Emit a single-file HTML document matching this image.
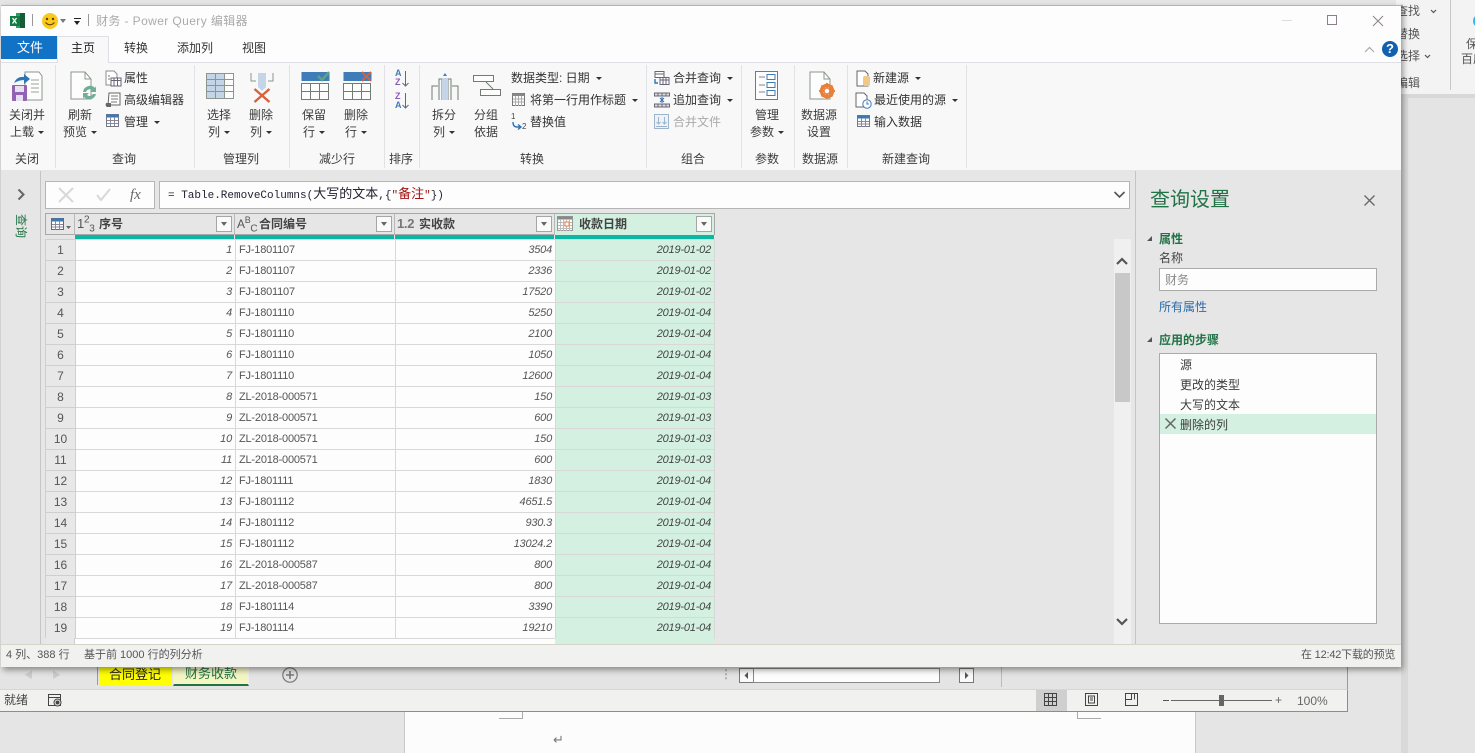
<!DOCTYPE html>
<html lang="zh"><head><meta charset="utf-8"><title>财务 - Power Query 编辑器</title>
<style>
*{box-sizing:border-box}
html,body{margin:0;padding:0;width:1475px;height:753px;overflow:hidden;background:#e5e5e5;font-family:"Liberation Sans","Noto Sans CJK SC",sans-serif;font-size:12px;color:#444}
.a{position:absolute}
.t{position:absolute;white-space:nowrap;line-height:16px;font-size:12px;color:#3c3c3c}
.c{text-align:center;transform:translateX(-50%)}
.gl{position:absolute;top:65px;height:103px;width:1px;background:#e2e2e6}
.ar{display:inline-block;width:0;height:0;border-left:3px solid transparent;border-right:3px solid transparent;border-top:3px solid #333;vertical-align:2px;margin-left:4px}
svg{position:absolute;overflow:visible}
table{position:absolute;left:45px;top:239px;border-collapse:collapse;table-layout:fixed;width:669px;background:#fdfdfd}
td{height:21px;padding:0 3px;font-size:11px;line-height:20px;border:1px solid #d8d8d8;border-left-style:dashed;color:#555;white-space:nowrap;overflow:hidden;letter-spacing:-.2px}
td:first-child{background:#e8e8e8;text-align:center;font-size:12px;color:#555;border:1px solid #cfcfcf;letter-spacing:0}
td:nth-child(2),td:nth-child(4),td:nth-child(5){text-align:right;font-style:italic}
td:nth-child(5){background:#d4f0e1;color:#444}
.ha{position:absolute;top:214px;height:21px;line-height:20px;font-weight:bold;font-size:12px;color:#444;white-space:nowrap}
.fb{position:absolute;top:216px;width:16px;height:16px;background:#fafafa;border:1px solid #a5a5a5}
.fb:after{content:"";position:absolute;left:4px;top:5px;border-left:3px solid transparent;border-right:3px solid transparent;border-top:4px solid #666}
</style></head><body>

<!-- Excel behind (top right) -->
<div class="a" style="left:1396px;top:0;width:79px;height:94px;background:#f3f3f3"></div>
<div class="a" style="left:1450px;top:0;width:1px;height:90px;background:#c8c8c8"></div>
<div class="a" style="left:1401px;top:94px;width:74px;height:4px;background:#d8d8d8"></div>
<div class="a" style="left:1401px;top:98px;width:7px;height:655px;background:#d9d9d9"></div>
<div class="a" style="left:1408px;top:98px;width:67px;height:655px;background:#e4e4e4"></div>
<div class="t" style="left:1396px;top:3px;color:#555">查找</div>
<div class="t" style="left:1396px;top:26px;color:#555">替换</div>
<div class="t" style="left:1396px;top:48px;color:#555">选择</div>
<div class="t" style="left:1396px;top:75px;color:#555">编辑</div>
<svg style="left:1430px;top:9px" width="7" height="5"><path d="M1 1l2.500 2.500L6 1" fill="none" stroke="#555" stroke-width="1.200"/></svg>
<svg style="left:1424px;top:54px" width="7" height="5"><path d="M1 1l2.500 2.500L6 1" fill="none" stroke="#555" stroke-width="1.200"/></svg>
<div class="t" style="left:1466px;top:36px;color:#555">保</div>
<div class="t" style="left:1461px;top:51px;color:#555">百度</div>
<div class="a" style="left:1473px;top:16px;width:6px;height:10px;border-radius:50%;background:#35b5e8"></div>

<!-- Excel lower part -->
<div class="a" style="left:0;top:667px;width:1348px;height:22px;background:#e4e4e4"></div>
<div class="a" style="left:0;top:689px;width:1348px;height:23px;background:#f1f1f0;border-top:1px solid #d6d6d6;border-bottom:1px solid #8a8f8a;border-right:1px solid #8a8f8a"></div>
<div class="a" style="left:1347px;top:667px;width:1px;height:22px;background:#9a9a9a"></div>
<div class="a" style="left:404px;top:712px;width:792px;height:41px;background:#fcfcfc;border-left:1px solid #c8c8c8;border-right:1px solid #c8c8c8"></div>
<div class="a" style="left:499px;top:712px;width:24px;height:7px;border-bottom:1px solid #aaa;border-right:1px solid #aaa"></div>
<div class="a" style="left:1077px;top:712px;width:24px;height:7px;border-bottom:1px solid #aaa;border-left:1px solid #aaa"></div>
<div class="t" style="left:553px;top:732px;font-size:13px;color:#777">↵</div>
<div class="a" style="left:97px;top:667px;width:1px;height:18px;background:#9a9a9a"></div>
<div class="a" style="left:100px;top:667px;width:71px;height:19px;background:#ffff00"></div>
<div class="t" style="left:109px;top:666px;font-size:13px;line-height:18px;color:#222">合同登记</div>
<div class="a" style="left:173px;top:667px;width:76px;height:19px;background:#f3f5c2;border-bottom:2px solid #217346;border-left:1px solid #eee;border-right:1px solid #eee"></div>
<div class="t" style="left:185px;top:665px;font-size:13px;line-height:18px;color:#217346">财务收款</div>
<svg style="left:282px;top:667px" width="16" height="16"><circle cx="8" cy="8" r="7.2" fill="none" stroke="#777" stroke-width="1.2"/><path d="M4 8h8M8 4v8" stroke="#777" stroke-width="1.6"/></svg>
<div class="t" style="left:24px;top:667px;color:#ccc;font-size:9px">◀</div><div class="t" style="left:52px;top:667px;color:#ccc;font-size:9px">▶</div>
<div class="t" style="left:720px;top:666px;color:#aaa;font-size:12px;font-weight:bold">⋮</div>
<div class="a" style="left:739px;top:668px;width:15px;height:15px;background:#fafafa;border:1px solid #777"></div>
<svg style="left:739px;top:668px" width="15" height="15"><path d="M9 4v7L5.5 7.5z" fill="#555"/></svg>
<div class="a" style="left:753px;top:668px;width:187px;height:15px;background:#fdfdfd;border:1px solid #888"></div>
<div class="a" style="left:959px;top:668px;width:15px;height:15px;background:#fafafa;border:1px solid #777"></div>
<svg style="left:959px;top:668px" width="15" height="15"><path d="M6 4v7l3.5-3.5z" fill="#555"/></svg>
<div class="a" style="left:1001px;top:667px;width:1px;height:20px;background:#bbb"></div>
<div class="t" style="left:4px;top:692px;color:#444">就绪</div>
<svg style="left:47px;top:693px" width="16" height="15" fill="none" stroke="#444"><rect x="1.5" y="1.5" width="12" height="11"/><path d="M1.5 4.5h12"/><circle cx="10.5" cy="9.5" r="3.5" fill="#f1f1f0"/><circle cx="10.5" cy="9.5" r="1.5" fill="#444"/></svg>
<div class="a" style="left:1036px;top:690px;width:31px;height:21px;background:#cfcfcf"></div>
<svg style="left:1044px;top:693px" width="14" height="14" fill="none" stroke="#444"><rect x=".5" y=".5" width="12" height="12"/><path d="M4.500.5v12M8.500.5v12M.5 4.500h12M.5 8.500h12"/></svg>
<svg style="left:1085px;top:693px" width="14" height="14" fill="none" stroke="#444"><rect x=".5" y=".5" width="12" height="12"/><rect x="3.500" y="3" width="6" height="7"/><path d="M5 5h3M5 7h3"/></svg>
<svg style="left:1125px;top:693px" width="14" height="14" fill="none" stroke="#444"><rect x=".5" y=".5" width="12" height="12"/><path d="M6.500.5v6H.5M9.500.5v6"/></svg>
<div class="a" style="left:1163px;top:700px;width:6px;height:1px;background:#555"></div>
<div class="a" style="left:1171px;top:700px;width:101px;height:1px;background:#666"></div>
<div class="a" style="left:1219px;top:695px;width:5px;height:11px;background:#666"></div>
<div class="t" style="left:1275px;top:692px;color:#666">+</div>
<div class="t" style="left:1297px;top:693px;color:#666">100%</div>

<!-- PQ window -->
<div class="a" style="left:1px;top:5px;width:1400px;height:662px;background:#e6e6e6;box-shadow:2px 3px 6px rgba(0,0,0,.4);border-top:1px solid #b5b5a8"></div>
<div class="a" style="left:1px;top:6px;width:1400px;height:57px;background:#fdfdfd"></div>
<div class="a" style="left:1px;top:62px;width:1400px;height:1px;background:#e0dfe6"></div>
<div class="a" style="left:1px;top:63px;width:1400px;height:107px;background:#f8f8f9"></div>

<!-- title bar -->
<svg style="left:9px;top:12px" width="17" height="17"><rect x="7" y="1" width="9" height="15" fill="#21a366"/><rect x="11" y="1" width="5" height="15" fill="#185c37"/><rect x="1" y="4" width="10" height="10" fill="#107c41"/><path d="M3.500 6l4 5.500M7.500 6l-4 5.500" stroke="#fff" stroke-width="1.300"/></svg>
<div class="a" style="left:32px;top:14px;width:1px;height:12px;background:#999"></div>
<svg style="left:41px;top:12px" width="18" height="18"><circle cx="9" cy="9" r="8" fill="#fbc81c"/><circle cx="6" cy="7" r="1.200" fill="#5a4000"/><circle cx="12" cy="7" r="1.200" fill="#5a4000"/><path d="M4.500 10.500q4.500 4.500 9 0" fill="none" stroke="#5a4000" stroke-width="1.100"/></svg>
<div class="a" style="left:60px;top:19px;border-left:3px solid transparent;border-right:3px solid transparent;border-top:4px solid #777"></div>
<div class="a" style="left:74px;top:18px;width:7px;height:1px;background:#222"></div>
<div class="a" style="left:74px;top:21px;border-left:3.5px solid transparent;border-right:3.5px solid transparent;border-top:4px solid #222"></div>
<div class="a" style="left:88px;top:14px;width:1px;height:12px;background:#999"></div>
<div class="t" style="left:96px;top:13px;font-size:12px;color:#aaa;letter-spacing:.4px">财务 - Power Query 编辑器</div>
<div class="a" style="left:1282px;top:20px;width:10px;height:1px;background:#ddd"></div>
<div class="a" style="left:1327px;top:15px;width:10px;height:10px;border:1px solid #8a7f8a"></div>
<svg style="left:1372px;top:15px" width="12" height="12"><path d="M1 1l10 10M11 1L1 11" stroke="#8a7f8a" stroke-width="1"/></svg>
<svg style="left:1364px;top:46px" width="11" height="7"><path d="M1 6l4.500-4.500L10 6" fill="none" stroke="#aaa" stroke-width="1.200"/></svg>
<div class="a" style="left:1382px;top:41px;width:16px;height:16px;border-radius:50%;background:#1261ae;color:#fff;text-align:center;font:bold 13px/16px 'Liberation Sans',sans-serif">?</div>

<!-- tabs -->
<div class="a" style="left:1px;top:36px;width:56px;height:23px;background:#1273c6"></div>
<div class="t" style="left:17px;top:40px;color:#fff;font-size:13px">文件</div>
<div class="a" style="left:57px;top:36px;width:52px;height:27px;background:#f8f8f9;border:1px solid #e0dfe6;border-bottom:0"></div>
<div class="t" style="left:71px;top:40px;color:#222">主页</div>
<div class="t" style="left:124px;top:40px;color:#333">转换</div>
<div class="t" style="left:177px;top:40px;color:#333">添加列</div>
<div class="t" style="left:242px;top:40px;color:#333">视图</div>

<!-- ribbon separators -->
<div class="gl" style="left:55px"></div><div class="gl" style="left:194px"></div><div class="gl" style="left:289px"></div><div class="gl" style="left:384px"></div><div class="gl" style="left:419px"></div><div class="gl" style="left:646px"></div><div class="gl" style="left:741px"></div><div class="gl" style="left:794px"></div><div class="gl" style="left:847px"></div><div class="gl" style="left:966px"></div>

<!-- close & load -->
<svg style="left:11px;top:71px" width="32" height="32"><path d="M14 1h14l3 4v24H14z" fill="#fdfdfd" stroke="#8c968c"/><path d="M20 9h8M20 13h8M20 17h8M20 21h8" stroke="#9aa29a"/><rect x="1" y="14" width="15" height="16" rx="1" fill="#9362b5"/><rect x="4" y="15" width="9" height="6" fill="#e8e0f0"/><rect x="5" y="24" width="7" height="6" fill="#e8e0f0"/><path d="M3 12q3-7 10-6V3l6 5-6 5V9q-5 0-10 3z" fill="#2e75b6"/></svg>
<div class="t c" style="left:27px;top:107px">关闭并</div>
<div class="t c" style="left:27px;top:124px">上载<span class="ar"></span></div>
<div class="t c" style="left:27px;top:151px">关闭</div>

<!-- refresh -->
<svg style="left:69px;top:71px" width="30" height="30"><path d="M2 1h14l6 7v20H2z" fill="#fdfdfd" stroke="#8c968c"/><path d="M16 1v7h6" fill="none" stroke="#8c968c"/><path d="M14 21a7 7 0 0 1 12-4l1-2v6h-6l2-2a4 4 0 0 0-6 2zM27 23a7 7 0 0 1-12 3l-1 2v-6h6l-2 2a4 4 0 0 0 6-1z" fill="#72ad98"/></svg>
<div class="t c" style="left:80px;top:107px">刷新</div>
<div class="t c" style="left:80px;top:124px">预览<span class="ar"></span></div>
<svg style="left:105px;top:70px" width="16" height="16"><path d="M1 1h8l3 3v11H1z" fill="#fff" stroke="#8c8c8c"/><rect x="6" y="8" width="10" height="8" fill="#fff" stroke="#667"/><path d="M6 10.500h10M9 8v8M12.500 8v8" stroke="#667"/><path d="M3 6h2M3 9h2" stroke="#777"/></svg>
<div class="t" style="left:124px;top:70px;color:#333">属性</div>
<svg style="left:105px;top:92px" width="16" height="16"><path d="M4 1h11v12H3z" fill="#fff" stroke="#666"/><path d="M6 4h7M6 7h7M6 10h6" stroke="#777"/><path d="M1 11h5v4H2q-2-1-1-4z" fill="#666"/></svg>
<div class="t" style="left:124px;top:92px;color:#333">高级编辑器</div>
<svg style="left:106px;top:114px" width="14" height="14"><rect x=".5" y=".5" width="12" height="12" fill="#fff" stroke="#778"/><rect x=".5" y=".5" width="12" height="3" fill="#3d79b5"/><path d="M4.500 3v9M8.500 3v9M1 6.500h11M1 9.500h11" stroke="#889"/></svg>
<div class="t" style="left:124px;top:114px;color:#333">管理<span class="ar" style="margin-left:6px"></span></div>
<div class="t c" style="left:124px;top:151px">查询</div>

<!-- choose / remove columns -->
<svg style="left:206px;top:73px" width="29" height="27"><rect x=".5" y=".5" width="27" height="25" fill="#c4d5e8" stroke="#8c968c"/><rect x="18.500" y=".5" width="9" height="25" fill="#fdfdfd" stroke="#8c968c"/><path d="M1 6.500h27M1 12.500h27M1 18.500h27M9.500 1v25M18.500 1v25" stroke="#8c968c"/></svg>
<div class="t c" style="left:219px;top:107px">选择</div>
<div class="t c" style="left:219px;top:124px">列<span class="ar"></span></div>
<svg style="left:250px;top:72px" width="24" height="32"><path d="M1 1v8h5M23 1v8h-5" fill="none" stroke="#8c968c"/><path d="M8 1h8v14l-4 4-4-4z" fill="#c4d5e8"/><path d="M3 17l15 13M18 17L3 30" stroke="#d9603b" stroke-width="2.400" transform="translate(1.500 0)"/></svg>
<div class="t c" style="left:261px;top:107px">删除</div>
<div class="t c" style="left:261px;top:124px">列<span class="ar"></span></div>
<div class="t c" style="left:241px;top:151px">管理列</div>

<!-- keep / remove rows -->
<svg style="left:301px;top:72px" width="29" height="29"><rect x=".5" y="0" width="28" height="9" fill="#3f7cb8"/><path d="M.5 11.500h27v16H.5zM.5 19.500h27M9.500 11v16M18.500 11v16" fill="#fdfdfd" stroke="#6f7d72"/><path d="M17 4l4 4 7-8" fill="none" stroke="#5fa285" stroke-width="2.400"/></svg>
<div class="t c" style="left:314px;top:107px">保留</div>
<div class="t c" style="left:314px;top:124px">行<span class="ar"></span></div>
<svg style="left:343px;top:72px" width="29" height="29"><rect x=".5" y="0" width="28" height="9" fill="#3f7cb8"/><path d="M.5 11.500h27v16H.5zM.5 19.500h27M9.500 11v16M18.500 11v16" fill="#fdfdfd" stroke="#6f7d72"/><path d="M19 0l9 9M28 0l-9 9" stroke="#d9603b" stroke-width="2"/></svg>
<div class="t c" style="left:356px;top:107px">删除</div>
<div class="t c" style="left:356px;top:124px">行<span class="ar"></span></div>
<div class="t c" style="left:337px;top:151px">减少行</div>

<!-- sort -->
<div class="t" style="left:395px;top:69px;font-size:9px;line-height:9px;color:#3f7cb8;font-weight:bold">A<br><span style="color:#8a5db5">Z</span></div>
<div class="t" style="left:395px;top:92px;font-size:9px;line-height:9px;color:#8a5db5;font-weight:bold">Z<br><span style="color:#3f7cb8">A</span></div>
<svg style="left:401px;top:70px" width="9" height="40" fill="none" stroke="#667"><path d="M4.500 1v15M1.500 13l3 3 3-3M4.500 23v15M1.500 35l3 3 3-3"/></svg>
<div class="t c" style="left:401px;top:151px">排序</div>

<!-- split / group -->
<svg style="left:431px;top:71px" width="28" height="30"><path d="M1 29V15h6M27 29V15h-6" fill="none" stroke="#6f7d72"/><path d="M8 29V8h3v21M17 29V8h3v21" fill="none" stroke="#6f7d72"/><rect x="11" y="7" width="6" height="22" fill="#c4d5e8"/><path d="M12 5l2-3 2 3z" fill="#3f7cb8"/></svg>
<div class="t c" style="left:444px;top:107px">拆分</div>
<div class="t c" style="left:444px;top:124px">列<span class="ar"></span></div>
<svg style="left:473px;top:75px" width="28" height="22"><rect x=".5" y=".5" width="20" height="6" fill="#fdfdfd" stroke="#6f7d72"/><rect x="7.500" y="14.500" width="20" height="6" fill="#fdfdfd" stroke="#6f7d72"/><path d="M13 7l7 7" stroke="#6f7d72"/></svg>
<div class="t c" style="left:486px;top:107px">分组</div>
<div class="t c" style="left:486px;top:124px">依据</div>
<div class="t" style="left:511px;top:70px;color:#333">数据类型: 日期<span class="ar" style="margin-left:6px"></span></div>
<svg style="left:512px;top:93px" width="14" height="14"><rect x=".5" y=".5" width="12" height="12" fill="#fff" stroke="#777"/><rect x=".5" y=".5" width="12" height="2.500" fill="#888"/><path d="M3.500 3v10M6.500 3v10M9.500 3v10M1 6h11M1 9h11" stroke="#aaa"/></svg>
<div class="t" style="left:530px;top:92px;color:#333">将第一行用作标题<span class="ar" style="margin-left:6px"></span></div>
<div class="t" style="left:511px;top:112px;font-size:8px;line-height:10px;color:#444">1</div>
<div class="t" style="left:522px;top:122px;font-size:8px;line-height:10px;color:#444">2</div>
<svg style="left:512px;top:121px" width="10" height="9"><path d="M1 1q0 5 4 5h4M6 3.500L9 6 6 8.500" fill="none" stroke="#2e75b6" stroke-width="1.400"/></svg>
<div class="t" style="left:530px;top:114px;color:#333">替换值</div>
<div class="t c" style="left:532px;top:151px">转换</div>

<!-- combine -->
<svg style="left:654px;top:71px" width="16" height="15"><rect x="1" y=".5" width="9" height="6" fill="#fff" stroke="#667"/><rect x="6" y="6.500" width="9" height="7" fill="#fff" stroke="#667"/><path d="M6 9h9M9 7v6M12 7v6M1 3h9" stroke="#667"/><path d="M1 8v4h3" fill="none" stroke="#2e75b6" stroke-width="1.400"/></svg>
<div class="t" style="left:673px;top:70px;color:#333">合并查询<span class="ar" style="margin-left:6px"></span></div>
<svg style="left:654px;top:92px" width="16" height="16"><path d="M.5 1h15v3H.5zM.5 12h15v3H.5zM4 1v3M8 1v3M12 1v3M4 12v3M8 12v3M12 12v3" fill="#ddd" stroke="#667"/><path d="M8 5v6M6 6l2 2 2-2M6 10l2-2 2 2" fill="none" stroke="#2e75b6"/></svg>
<div class="t" style="left:673px;top:92px;color:#333">追加查询<span class="ar" style="margin-left:6px"></span></div>
<svg style="left:654px;top:114px" width="16" height="15"><rect x=".5" y=".5" width="14" height="14" fill="#eef2f6" stroke="#9cb4cc"/><path d="M4.500 3v7M2.500 8l2 2 2-2M10.500 3v7M8.500 8l2 2 2-2M2 12.500h11" fill="none" stroke="#9cb4cc"/></svg>
<div class="t" style="left:673px;top:114px;color:#aaa">合并文件</div>
<div class="t c" style="left:693px;top:151px">组合</div>

<!-- parameters -->
<svg style="left:755px;top:71px" width="24" height="29" fill="none"><rect x=".5" y=".5" width="22" height="28" fill="#fdfdfd" stroke="#6f7d72"/><path d="M4 6h6M4 14h6M4 21h6" stroke="#888"/><path d="M12 3.500h8v5h-8zM12 11.500h8v5h-8zM12 19.500h8v5h-8z" stroke="#3f7cb8"/></svg>
<div class="t c" style="left:767px;top:107px">管理</div>
<div class="t c" style="left:767px;top:124px">参数<span class="ar"></span></div>
<div class="t c" style="left:767px;top:151px">参数</div>

<!-- data source -->
<svg style="left:809px;top:71px" width="28" height="30"><path d="M1 1h14l6 7v20H1z" fill="#fdfdfd" stroke="#8c968c"/><path d="M15 1v7h6" fill="none" stroke="#8c968c"/><circle cx="18" cy="20" r="5.500" fill="none" stroke="#e8803c" stroke-width="3.500"/><path d="M18 12v16M10 20h16M12.500 14.500l11 11M23.500 14.500l-11 11" stroke="#e8803c" stroke-width="2"/><circle cx="18" cy="20" r="2.200" fill="#fdfdfd"/></svg>
<div class="t c" style="left:819px;top:107px">数据源</div>
<div class="t c" style="left:819px;top:124px">设置</div>
<div class="t c" style="left:820px;top:151px">数据源</div>

<!-- new query -->
<svg style="left:856px;top:70px" width="16" height="17"><path d="M1 1h8l3 3v12H1z" fill="#fff" stroke="#666"/><rect x="7" y="6" width="7" height="10" rx="2" fill="#f0c987"/></svg>
<div class="t" style="left:873px;top:70px;color:#333">新建源<span class="ar" style="margin-left:6px"></span></div>
<svg style="left:855px;top:92px" width="18" height="17"><path d="M1 1h8l3 3v11H1z" fill="#fff" stroke="#666"/><circle cx="12" cy="12" r="4.200" fill="#fff" stroke="#3f7cb8"/><path d="M12 9.500V12h2" fill="none" stroke="#3f7cb8"/></svg>
<div class="t" style="left:874px;top:92px;color:#333">最近使用的源<span class="ar" style="margin-left:6px"></span></div>
<svg style="left:857px;top:115px" width="14" height="13"><rect x=".5" y=".5" width="12" height="11" fill="#fff" stroke="#778"/><rect x=".5" y=".5" width="12" height="3" fill="#3d79b5"/><path d="M4.500 3v9M8.500 3v9M1 6.500h11M1 9h11" stroke="#889"/></svg>
<div class="t" style="left:874px;top:114px;color:#333">输入数据</div>
<div class="t c" style="left:906px;top:151px">新建查询</div>

<!-- left rail -->
<div class="a" style="left:40px;top:171px;width:1px;height:473px;background:#c5c5c5"></div>
<svg style="left:17px;top:188px" width="9" height="13"><path d="M1.500 1.500l5 5-5 5" fill="none" stroke="#666" stroke-width="2"/></svg>
<div class="t" style="left:15px;top:214px;font-size:12px;line-height:12px;width:12px;color:#217346;writing-mode:vertical-rl;text-orientation:sideways">查询</div>

<!-- formula bar -->
<div class="a" style="left:45px;top:181px;width:110px;height:28px;background:#fdfdfd;border:1px solid #b5b5b5"></div>
<svg style="left:58px;top:187px" width="16" height="16"><path d="M1 1l14 14M15 1L1 15" stroke="#d8d8d8" stroke-width="2"/></svg>
<svg style="left:96px;top:188px" width="15" height="14"><path d="M1 7l4 5 9-11" fill="none" stroke="#d8d8d8" stroke-width="2"/></svg>
<div class="t" style="left:130px;top:186px;font:italic 15px/18px 'Liberation Serif',serif;color:#666">fx</div>
<div class="a" style="left:159px;top:181px;width:971px;height:28px;background:#fdfdfd;border:1px solid #b5b5b5"></div>
<div class="t" style="left:168px;top:187px;font-family:'Liberation Mono','Noto Sans CJK SC',monospace;font-size:11px;color:#223">= Table.RemoveColumns(<span style="font-size:13px">大写的文本</span>,{<span style="color:#a31515">"<span style="font-size:13px">备注</span>"</span>})</div>
<svg style="left:1113px;top:191px" width="13" height="8"><path d="M1.500 1l5 5 5-5" fill="none" stroke="#555" stroke-width="1.600"/></svg>

<!-- table header -->
<div class="a" style="left:45px;top:213px;width:670px;height:22px;background:#e6e6e6;border:1px solid #a8a8a8"></div>
<div class="a" style="left:555px;top:214px;width:159px;height:21px;background:#d4f0e1"></div>
<div class="a" style="left:74px;top:214px;width:1px;height:21px;background:#b8b8b8"></div>
<div class="a" style="left:234px;top:214px;width:1px;height:21px;background:#b8b8b8"></div>
<div class="a" style="left:394px;top:214px;width:1px;height:21px;background:#b8b8b8"></div>
<div class="a" style="left:554px;top:214px;width:1px;height:21px;background:#b8b8b8"></div>
<svg style="left:51px;top:218px" width="22" height="13"><rect x=".5" y=".5" width="12" height="11" fill="#fff" stroke="#667"/><rect x=".5" y=".5" width="12" height="3" fill="#3d79b5"/><path d="M4.500 3v9M8.500 3v9M1 6.500h11M1 9h11" stroke="#889"/><path d="M15 8l2.500 3L20 8z" fill="#666"/></svg>
<div class="t" style="left:77px;top:216px;font-size:13px;color:#555;letter-spacing:-.3px">1<sup style="font-size:10px;line-height:0">2</sup><sub style="font-size:10px;line-height:0">3</sub></div>
<div class="ha" style="left:99px">序号</div><div class="fb" style="left:216px"></div>
<div class="t" style="left:237px;top:216px;font-size:12px;color:#555;letter-spacing:-.3px">A<sup style="font-size:9px;line-height:0">B</sup><sub style="font-size:10px;line-height:0">C</sub></div>
<div class="ha" style="left:259px">合同编号</div><div class="fb" style="left:376px"></div>
<div class="t" style="left:397px;top:216px;font-size:13px;font-weight:bold;color:#777;letter-spacing:-.3px">1.2</div>
<div class="ha" style="left:419px">实收款</div><div class="fb" style="left:536px"></div>
<svg style="left:557px;top:216px" width="17" height="16"><rect x=".5" y=".5" width="15" height="14" fill="#fdfdfd" stroke="#999"/><rect x=".5" y=".5" width="15" height="3" fill="#888"/><path d="M3.500 3v12M6.500 3v12M9.500 3v12M12.500 3v12M1 6.500h14M1 9.500h14M1 12.500h14" stroke="#bbb"/><rect x="8" y="6" width="4" height="4" fill="#fff" stroke="#e8803c"/></svg>
<div class="ha" style="left:579px">收款日期</div><div class="fb" style="left:696px"></div>
<div class="a" style="left:75px;top:235px;width:639px;height:4px;background:#0cb6a4"></div>
<div class="a" style="left:234px;top:235px;width:1px;height:4px;background:#e6e6e6"></div>
<div class="a" style="left:394px;top:235px;width:1px;height:4px;background:#e6e6e6"></div>
<div class="a" style="left:554px;top:235px;width:1px;height:4px;background:#e6e6e6"></div>

<!-- table -->
<table><colgroup><col style="width:30px"><col style="width:160px"><col style="width:160px"><col style="width:160px"><col style="width:159px"></colgroup><tbody>
<tr><td>1</td><td>1</td><td>FJ-1801107</td><td>3504</td><td>2019-01-02</td></tr>
<tr><td>2</td><td>2</td><td>FJ-1801107</td><td>2336</td><td>2019-01-02</td></tr>
<tr><td>3</td><td>3</td><td>FJ-1801107</td><td>17520</td><td>2019-01-02</td></tr>
<tr><td>4</td><td>4</td><td>FJ-1801110</td><td>5250</td><td>2019-01-04</td></tr>
<tr><td>5</td><td>5</td><td>FJ-1801110</td><td>2100</td><td>2019-01-04</td></tr>
<tr><td>6</td><td>6</td><td>FJ-1801110</td><td>1050</td><td>2019-01-04</td></tr>
<tr><td>7</td><td>7</td><td>FJ-1801110</td><td>12600</td><td>2019-01-04</td></tr>
<tr><td>8</td><td>8</td><td>ZL-2018-000571</td><td>150</td><td>2019-01-03</td></tr>
<tr><td>9</td><td>9</td><td>ZL-2018-000571</td><td>600</td><td>2019-01-03</td></tr>
<tr><td>10</td><td>10</td><td>ZL-2018-000571</td><td>150</td><td>2019-01-03</td></tr>
<tr><td>11</td><td>11</td><td>ZL-2018-000571</td><td>600</td><td>2019-01-03</td></tr>
<tr><td>12</td><td>12</td><td>FJ-1801111</td><td>1830</td><td>2019-01-04</td></tr>
<tr><td>13</td><td>13</td><td>FJ-1801112</td><td>4651.5</td><td>2019-01-04</td></tr>
<tr><td>14</td><td>14</td><td>FJ-1801112</td><td>930.3</td><td>2019-01-04</td></tr>
<tr><td>15</td><td>15</td><td>FJ-1801112</td><td>13024.2</td><td>2019-01-04</td></tr>
<tr><td>16</td><td>16</td><td>ZL-2018-000587</td><td>800</td><td>2019-01-04</td></tr>
<tr><td>17</td><td>17</td><td>ZL-2018-000587</td><td>800</td><td>2019-01-04</td></tr>
<tr><td>18</td><td>18</td><td>FJ-1801114</td><td>3390</td><td>2019-01-04</td></tr>
<tr><td>19</td><td>19</td><td>FJ-1801114</td><td>19210</td><td>2019-01-04</td></tr>
</tbody></table>
<div class="a" style="left:45px;top:638px;width:30px;height:6px;background:#e8e8e8;border-right:1px solid #cfcfcf"></div>
<div class="a" style="left:75px;top:638px;width:480px;height:6px;background:#fdfdfd;border-top:1px solid #d8d8d8"></div>
<div class="a" style="left:555px;top:638px;width:159px;height:6px;background:#d4f0e1"></div>

<!-- v scrollbar -->
<div class="a" style="left:1114px;top:239px;width:17px;height:405px;background:#f0f0f0"></div>
<div class="a" style="left:1115px;top:273px;width:15px;height:129px;background:#c8c8c8"></div>
<svg style="left:1116px;top:256px" width="12" height="9"><path d="M1 8l5-5 5 5" fill="none" stroke="#555" stroke-width="2.200"/></svg>
<svg style="left:1116px;top:618px" width="12" height="9"><path d="M1 1l5 5 5-5" fill="none" stroke="#555" stroke-width="2.200"/></svg>

<!-- query settings -->
<div class="a" style="left:1135px;top:171px;width:1px;height:473px;background:#c5c5c5"></div>
<div class="t" style="left:1150px;top:187px;font-size:20px;line-height:26px;color:#217346">查询设置</div>
<svg style="left:1364px;top:195px" width="11" height="11"><path d="M.5.5l10 10M10.500.5l-10 10" stroke="#666" stroke-width="1.300"/></svg>
<div class="a" style="left:1147px;top:236px;border-bottom:5px solid #555;border-left:5px solid transparent"></div>
<div class="t" style="left:1159px;top:231px;font-weight:bold;color:#217346">属性</div>
<div class="t" style="left:1159px;top:250px;color:#444">名称</div>
<div class="a" style="left:1159px;top:268px;width:218px;height:23px;background:#fdfdfd;border:1px solid #aaa"></div>
<div class="t" style="left:1165px;top:272px;color:#888">财务</div>
<div class="t" style="left:1159px;top:299px;color:#2a6cad">所有属性</div>
<div class="a" style="left:1147px;top:337px;border-bottom:5px solid #555;border-left:5px solid transparent"></div>
<div class="t" style="left:1159px;top:332px;font-weight:bold;color:#217346">应用的步骤</div>
<div class="a" style="left:1159px;top:353px;width:218px;height:271px;background:#fdfdfd;border:1px solid #aaa"></div>
<div class="t" style="left:1180px;top:357px">源</div>
<div class="t" style="left:1180px;top:377px">更改的类型</div>
<div class="t" style="left:1180px;top:397px">大写的文本</div>
<div class="a" style="left:1160px;top:414px;width:216px;height:20px;background:#d4f0e1"></div>
<svg style="left:1165px;top:418px" width="11" height="11"><path d="M.5.5l10 10M10.500.5l-10 10" stroke="#666" stroke-width="1.500"/></svg>
<div class="t" style="left:1180px;top:417px">删除的列</div>

<!-- status bar -->
<div class="a" style="left:1px;top:644px;width:1400px;height:23px;background:#f1f1f0;border-top:1px solid #d4d4c8"></div>
<div class="t" style="left:6px;top:647px;font-size:11px;color:#555">4 列、388 行</div>
<div class="t" style="left:84px;top:647px;font-size:11px;color:#555">基于前 1000 行的列分析</div>
<div class="t" style="left:1301px;top:647px;font-size:11px;color:#555;letter-spacing:-.2px">在 12:42下载的预览</div>
</body></html>
